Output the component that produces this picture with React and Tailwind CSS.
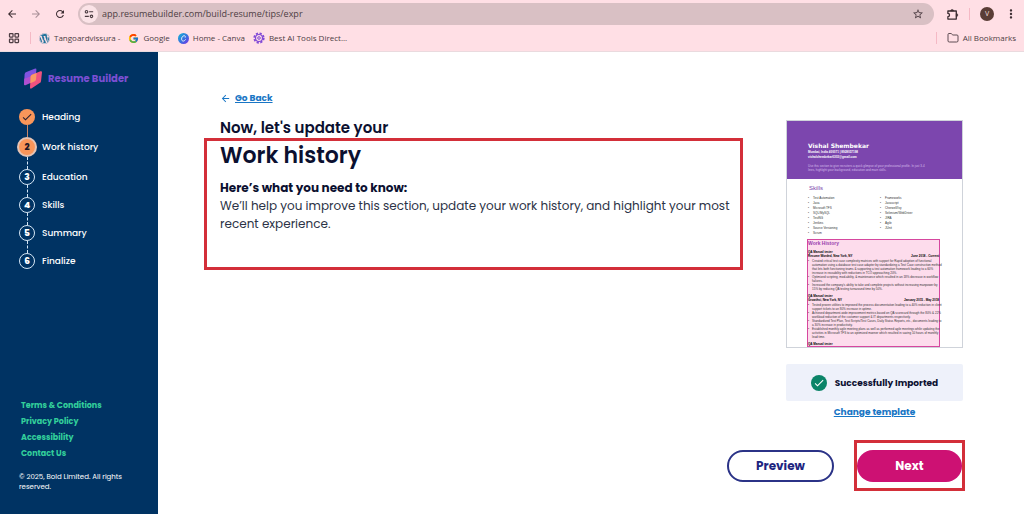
import { Folder, LayoutGrid } from "lucide-react";
import { FcGoogle } from "react-icons/fc";
import { FaWordpress } from "react-icons/fa";
import {
  MdArrowBack,
  MdArrowForward,
  MdCheck,
  MdMoreVert,
  MdRefresh,
  MdStarBorder,
} from "react-icons/md";

const steps = [
  { id: 1, label: "Heading", status: "done" },
  { id: 2, label: "Work history", status: "active" },
  { id: 3, label: "Education", status: "todo" },
  { id: 4, label: "Skills", status: "todo" },
  { id: 5, label: "Summary", status: "todo" },
  { id: 6, label: "Finalize", status: "todo" },
];

const footerLinks = ["Terms & Conditions", "Privacy Policy", "Accessibility", "Contact Us"];

const skills = [
  ["Test Automation", "Java", "Microsoft TFS", "SQL/MySQL", "TestNG", "Jenkins", "Source Versioning", "Scrum"],
  ["Frameworks", "Javascript", "Cherwell/Ivy", "Selenium/WebDriver", "JIRA", "Agile", "JUnit"],
];

const jobs = [
  {
    title: "QA Manual tester",
    company: "Resume Worded, New York, NY",
    dates: "June 2018 - Current",
    points: [
      [
        "Created critical test case complexity matrices with support for Rapid adoption of functional",
        "automation using a database test case adapter by standardizing a Test Case construction method",
        "that lets both functioning teams & supporting a test automation framework leading to a 60%",
        "increase in reusability with reductions in TCO approaching 20%.",
      ],
      [
        "Optimized scripting, mod-ability, & maintenance which resulted in an 18% decrease in workflow",
        "failures.",
      ],
      [
        "Increased the company's ability to take and complete projects without increasing manpower by",
        "15% by reducing QA testing turnaround time by 50%.",
      ],
    ],
  },
  {
    title: "QA Manual tester",
    company: "Growthsi, New York, NY",
    dates: "January 2015 - May 2018",
    points: [
      [
        "Tested proven utilities to improved the process documentation leading to a 40% reduction in client",
        "support tickets to an 80% increase in uptime.",
      ],
      [
        "Achieved department-wide improvement metrics based on QA scorecard through the 80% & 22%",
        "workload reduction of the customer support & IT departments respectively.",
      ],
      [
        "Standardized Test Plan, Test Scripts/Test Cases, Daily Status Reports, etc., documents leading to",
        "a 30% increase in productivity.",
      ],
      [
        "Established monthly agile meeting plans as well as performed agile meetings while updating the",
        "activities in Microsoft TFS to an optimized manner which resulted in saving 10 hours of monthly",
        "lead time.",
      ],
    ],
  },
];

function TuneIcon() {
  return (
    <svg viewBox="0 0 12 12" className="size-[10px]" fill="none" stroke="#4a3b40" strokeWidth="1.3">
      <circle cx="3" cy="3.2" r="1.5" />
      <path d="M6.2 3.2H11M1 8.8h4.8" />
      <circle cx="9" cy="8.8" r="1.5" />
    </svg>
  );
}

function ExtensionsIcon() {
  return (
    <svg viewBox="0 0 24 24" className="size-[13px]" fill="none" stroke="#3b2c31" strokeWidth="2.4" strokeLinejoin="round">
      <path d="M3.500 5.500H19V20.500H3.500V16a3 3 0 0 0 0-6Z" />
      <path d="M8.500 5.500a2.800 2.800 0 0 1 5.600 0ZM19 10.200a2.800 2.800 0 0 1 0 5.600Z" fill="#3b2c31" strokeWidth="1" />
    </svg>
  );
}

function CanvaIcon() {
  return (
    <svg viewBox="0 0 24 24" className="size-[11px]">
      <defs>
        <linearGradient id="canva" x1="0" y1="0" x2="1" y2="1">
          <stop offset="0" stopColor="#12b8d4" />
          <stop offset="0.55" stopColor="#3a6fe0" />
          <stop offset="1" stopColor="#7a2fe6" />
        </linearGradient>
      </defs>
      <circle cx="12" cy="12" r="12" fill="url(#canva)" />
      <path
        d="M16 9.200c.6-2.200-.8-3.700-3-3.300-3.300.6-5.500 4.200-5.200 7.600.2 2.600 1.700 4.300 4 4.100 1.800-.2 3.300-1.400 4.300-3"
        fill="none"
        stroke="#fff"
        strokeWidth="1.8"
        strokeLinecap="round"
      />
    </svg>
  );
}

function AiToolsIcon() {
  return (
    <svg viewBox="0 0 24 24" className="size-[12px]" fill="none" stroke="#8148d6">
      <circle cx="12" cy="12" r="9.500" strokeWidth="3.600" strokeDasharray="4.400 3.060" />
      <circle cx="12" cy="12" r="7" strokeWidth="2.400" />
      <circle cx="12" cy="12" r="2.600" strokeWidth="2" />
    </svg>
  );
}

function Logo() {
  return (
    <svg viewBox="0 0 18 21" className="h-[21px] w-[18px]">
      <path d="M.6 6.200Q.8 4.600 2.400 4L10.600.7q2-.7 1.800 1L11.500 12 0 16.500Z" fill="#8153e0" />
      <path d="M.3 10.800 7 8.200v6.600L1.400 17.200Q0 17.600 0 16.200Z" fill="#b04fd0" />
      <path d="M6.600 8.600Q6.800 7.200 8 6.700L16.400 3.300q1.600-.5 1.600 1L17 13.200q-.2 1.400-1.400 1.900L7.800 20.300Q6 21.300 6 19.500Z" fill="#f0527f" />
      <path d="M6.600 8.600Q6.800 7.200 8 6.700L12.600 4.900 12 11.600q-.1 1.200-1.200 1.700L6.300 15.200Z" fill="#f99a66" />
    </svg>
  );
}

function BrowserBar() {
  return (
    <header className="border-b border-[#eadade] bg-[#ffdfe5] font-['Open_Sans',sans-serif] text-[#4d3d43]">
      <div className="flex h-7 items-center pr-1.5 pl-1.5">
        <button aria-label="Back" className="mr-3 text-[#3b2c31]">
          <MdArrowBack className="size-3" />
        </button>
        <button aria-label="Forward" className="mr-3 text-[#a88f97]">
          <MdArrowForward className="size-3" />
        </button>
        <button aria-label="Reload" className="mr-3 text-[#3b2c31]">
          <MdRefresh className="size-3" />
        </button>
        <div className="flex h-[22px] flex-1 items-center rounded-full bg-[#d9c0c4] pr-2.5 pl-0.5">
          <button aria-label="Site information" className="flex size-[18px] items-center justify-center rounded-full bg-[#fbe3e7]">
            <TuneIcon />
          </button>
          <input
            type="text"
            aria-label="Address"
            defaultValue="app.resumebuilder.com/build-resume/tips/expr"
            className="ml-1 min-w-0 flex-1 bg-transparent text-[9px] leading-4 outline-none"
          />
          <button aria-label="Bookmark this page">
            <MdStarBorder className="size-3" />
          </button>
        </div>
        <button aria-label="Extensions" className="ml-3">
          <ExtensionsIcon />
        </button>
        <span className="ml-2.5 h-3 w-px bg-[#f5b9c5]" />
        <button aria-label="Profile" className="ml-2.5 flex size-[14px] items-center justify-center rounded-full bg-[#5a3d36] text-[7px] text-[#f3dfd9]">
          V
        </button>
        <button aria-label="Menu" className="ml-2.5 text-[#3b2c31]">
          <MdMoreVert className="size-3.5" />
        </button>
      </div>

      <nav aria-label="Bookmarks" className="flex h-[23px] items-center pr-2 pb-[3px] pl-2 text-[8px] leading-3">
        <button aria-label="Tab groups">
          <LayoutGrid className="size-3" strokeWidth={2.5} />
        </button>
        <span className="ml-2.5 h-3 w-px bg-[#f5b9c5]" />
        <a href="#wordpress" className="ml-2 flex items-center gap-1">
          <FaWordpress className="size-[11px] text-[#23739c]" />
          Tangoardvissura -
        </a>
        <a href="#google" className="ml-2 flex items-center gap-1">
          <FcGoogle className="size-[11px]" />
          Google
        </a>
        <a href="#canva" className="ml-2 flex items-center gap-1">
          <CanvaIcon />
          Home - Canva
        </a>
        <a href="#ai-tools" className="ml-2 flex items-center gap-1">
          <AiToolsIcon />
          Best AI Tools Direct...
        </a>
        <span className="ml-auto h-3 w-px bg-[#f5b9c5]" />
        <button className="ml-2.5 flex items-center gap-1">
          <Folder className="size-3" strokeWidth={1.8} />
          All Bookmarks
        </button>
      </nav>
    </header>
  );
}

function StepMarker({ step }) {
  if (step.status === "done") {
    return (
      <span className="flex size-4 items-center justify-center rounded-full bg-[#f9965a] text-[#2b2230]">
        <MdCheck className="size-3" />
      </span>
    );
  }
  if (step.status === "active") {
    return (
      <span className="flex size-5 items-center justify-center rounded-full border-2 border-[#e5c4b4] bg-[#f9965a] text-[9px] leading-3 font-extrabold text-[#1d1626]">
        {step.id}
      </span>
    );
  }
  return (
    <span className="flex size-4 items-center justify-center rounded-full border border-[#d5e6f5] text-[9px] leading-3 font-extrabold text-white">
      {step.id}
    </span>
  );
}

function Sidebar() {
  return (
    <aside className="flex w-[158px] shrink-0 flex-col bg-[#003363] pt-4 pb-[22px] text-white">
      <a href="#home" className="ml-6 flex items-center gap-1.5 text-[10px] leading-5 font-bold text-[#7c4fd3]">
        <Logo />
        Resume Builder
      </a>

      <ol className="mt-5 ml-[17px]">
        {steps.map((step, i) => (
          <li key={step.id} className="flex gap-[5px]">
            <div className="flex w-5 flex-col items-center">
              <StepMarker step={step} />
              {i < steps.length - 1 && (
                <span
                  className={
                    step.status === "done"
                      ? "h-3 border-l border-[#c98768]"
                      : "h-3 border-l border-dashed border-[#d5e6f5]"
                  }
                />
              )}
            </div>
            <a
              href="#step"
              className={
                step.status === "active"
                  ? "text-[9px] leading-5 font-medium"
                  : "text-[9px] leading-4 font-medium"
              }
            >
              {step.label}
            </a>
          </li>
        ))}
      </ol>

      <nav aria-label="Legal" className="mt-auto ml-[21px] flex flex-col items-start text-[8px] leading-4 font-bold text-[#33cf9b]">
        {footerLinks.map((link) => (
          <a key={link} href="#legal">
            {link}
          </a>
        ))}
      </nav>
      <p className="mt-2.5 ml-[19px] w-[110px] text-[7px] leading-[10px]">
        © 2025, Bold Limited. All rights reserved.
      </p>
    </aside>
  );
}

function ResumePreview() {
  return (
    <div className="h-[228px] overflow-hidden border border-[#cfd3da] bg-white font-['Liberation_Sans',sans-serif] text-[3px] leading-[4px] text-[#333]">
      <div className="h-[58px] bg-[#7c46ae] pt-5 pl-[21px] text-white">
        <p className="font-['DejaVu_Sans',sans-serif] text-[6px] leading-[9px] font-bold">Vishal Shembekar</p>
        <p className="leading-[5px] font-bold">Mumbai, India 400071 | 8928057198</p>
        <p className="leading-[5px] font-bold">vishalshembekar0303@gmail.com</p>
        <p className="mt-1 whitespace-nowrap text-[#d5bdea]">
          Use this section to give recruiters a quick glimpse of your professional profile. In just 3-4
          <br />
          lines, highlight your background, education and main skills.
        </p>
      </div>

      <h3 className="mt-1.5 ml-[22px] text-[6px] leading-[7px] font-medium text-[#7c46ae]">Skills</h3>
      <div className="mt-1 ml-[21px] flex h-[41px]">
        {skills.map((column) => (
          <ul key={column[0]} className="w-[72px] leading-[5px]">
            {column.map((skill) => (
              <li key={skill} className="flex gap-1">
                <span>•</span>
                {skill}
              </li>
            ))}
          </ul>
        ))}
      </div>

      <div className="mt-0.5 ml-5 h-[108px] w-[133px] border border-[#d6479f] bg-[#fddcec] whitespace-nowrap">
        <h3 className="text-[5px] leading-[7px] font-bold text-[#9a3fae]">Work History</h3>
        {jobs.map((job) => (
          <div key={job.company} className="mt-[3px]">
            <p className="font-bold text-black">{job.title}</p>
            <p className="flex justify-between font-bold text-black">
              <span>{job.company}</span>
              <span>{job.dates}</span>
            </p>
            <ul className="mt-px">
              {job.points.map((lines) => (
                <li key={lines[0]} className="flex gap-[3px]">
                  <span>•</span>
                  <span>
                    {lines.map((line) => (
                      <span key={line} className="block">
                        {line}
                      </span>
                    ))}
                  </span>
                </li>
              ))}
            </ul>
          </div>
        ))}
        <p className="mt-[3px] font-bold text-black">QA Manual tester</p>
      </div>
    </div>
  );
}

export default function App() {
  return (
    <div className="flex min-h-screen flex-col bg-white font-['Poppins','Inter',sans-serif]">
      <BrowserBar />

      <div className="flex flex-1">
        <Sidebar />

        <main className="flex min-w-0 flex-1 flex-col pr-[59px] pl-[46px]">
          <div className="flex justify-between gap-8">
            {/* INTRO */}
            <section className="max-w-[539px] flex-1 pt-9">
              <a href="#back" className="ml-4 flex h-5 w-fit items-center gap-1 text-[9px] leading-5 font-bold text-[#1976c5]">
                <MdArrowBack className="size-[11px]" />
                <span className="underline">Go Back</span>
              </a>
              <h2 className="mt-2.5 ml-4 text-[15px] leading-5 font-semibold text-[#0b1030]">
                Now, let's update your
              </h2>
              <div className="h-[132px] border-[3px] border-[#d32f39] pt-px pl-[13px] text-[#0b1030]">
                <h1 className="text-[22px] leading-7 font-semibold">Work history</h1>
                <p className="mt-[9px] text-[12px] leading-[18px] font-bold">Here’s what you need to know:</p>
                <p className="text-[12px] leading-[18px] text-[#2c3346]">
                  We’ll help you improve this section, update your work history, and highlight your most
                  recent experience.
                </p>
              </div>
            </section>

            {/* TEMPLATE */}
            <section className="mr-0.5 flex w-[177px] flex-col pt-[68px]">
              <ResumePreview />
              <div className="mt-4 flex h-[37px] items-center justify-center gap-2 rounded-xs bg-[#eef1fa] text-[9px] leading-4 font-bold text-[#0b1030]">
                <span className="flex size-4 items-center justify-center rounded-full bg-[#0b8468] text-white">
                  <MdCheck className="size-3" />
                </span>
                Successfully Imported
              </div>
              <a href="#template" className="mt-[3px] text-center text-[9px] leading-4 font-bold text-[#1976c5] underline">
                Change template
              </a>
            </section>
          </div>

          {/* ACTIONS */}
          <div className="mt-5 flex items-center justify-end gap-5 pb-5">
            <button className="h-8 w-[107px] rounded-full border-2 border-[#2b3387] text-[12px] leading-4 font-bold text-[#1d2480]">
              Preview
            </button>
            <div className="flex h-[51px] w-[111px] items-center border-[3px] border-[#d32f39]">
              <button className="h-8 w-full rounded-full bg-[#cd1173] text-[12px] leading-4 font-bold text-white">
                Next
              </button>
            </div>
          </div>
        </main>
      </div>
    </div>
  );
}
